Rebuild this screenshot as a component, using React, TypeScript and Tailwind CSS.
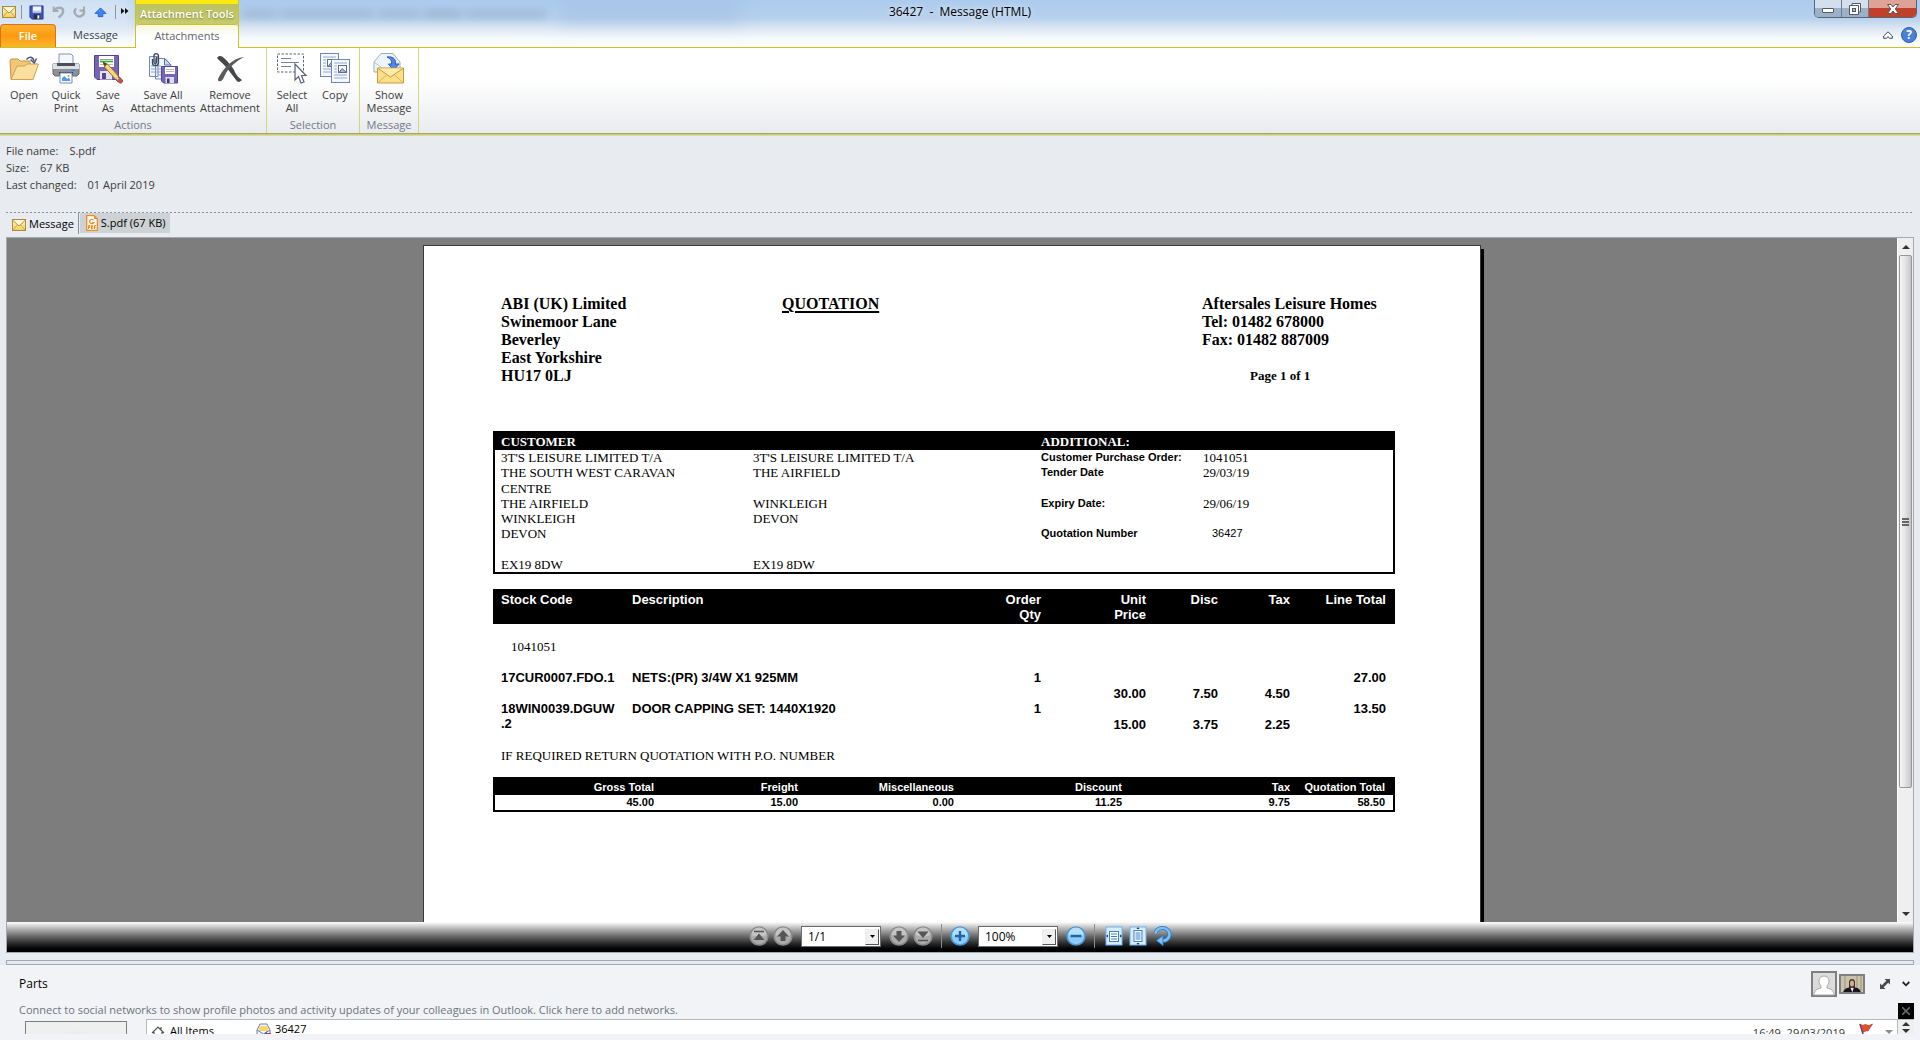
import React from "react";

const UI_FONT = "font-['Open_Sans','Noto_Sans',sans-serif]";
const SERIF = "font-['Liberation_Serif',serif]";
const SANS = "font-['Liberation_Sans',sans-serif]";

/* ---------- Icons ---------- */

const Envelope = ({ className = "" }: { className?: string }) => (
  <svg viewBox="0 0 14 12" className={`w-[14px] h-[12px] ${className}`}>
    <defs>
      <linearGradient id="env" x1="0" y1="0" x2="0" y2="1">
        <stop offset="0" stopColor="#fff7c8" />
        <stop offset="1" stopColor="#f3cf5e" />
      </linearGradient>
    </defs>
    <rect x="0.5" y="0.5" width="13" height="11" fill="url(#env)" stroke="#b08a3c" />
    <path d="M1 1.5 L7 7 L13 1.5" fill="#fff9dc" stroke="#b58f40" />
    <path d="M1 11 L5.2 6 M13 11 L8.8 6" stroke="#cfa650" fill="none" />
  </svg>
);

const Floppy = () => (
  <svg viewBox="0 0 16 16" className="w-[15px] h-[15px]">
    <path d="M1 1 H15 V15 H3 L1 13 Z" fill="#3f52c4" stroke="#2a3a8c" />
    <rect x="4" y="1.5" width="9" height="6.5" fill="#f4f7ff" />
    <path d="M4 6 H13 V8 H4Z" fill="#b8c6f0" />
    <rect x="5" y="10" width="7" height="5" fill="#2b2f3c" />
    <rect x="9" y="11" width="2" height="3.5" fill="#fff" />
  </svg>
);

const Undo = () => (
  <svg viewBox="0 0 14 14" className="w-[13px] h-[14px]">
    <path d="M1.800 1 V6 H7" fill="none" stroke="#a6abb2" strokeWidth="2.200" />
    <path d="M2.500 5.500 C5 1.500 12 1 12 6 C12 9 10 11 7 12.800" fill="none" stroke="#a6abb2" strokeWidth="2.600" />
  </svg>
);

const Redo = () => (
  <svg viewBox="0 0 14 14" className="w-[13px] h-[14px]">
    <path d="M3.500 3 A5 5 0 1 0 11.500 5" fill="none" stroke="#a6abb2" strokeWidth="2.600" />
    <path d="M7 5.500 H11.800 V1" fill="none" stroke="#a6abb2" strokeWidth="2.200" />
  </svg>
);

const ArrowUpBlue = () => (
  <svg viewBox="0 0 14 12" className="w-[13px] h-[11px]">
    <path d="M7 1 L13 7 H9.5 V10.5 H4.5 V7 H1 Z" fill="#3f86ee" stroke="#1f5fd0" />
  </svg>
);

const OpenIcon = () => (
  <svg viewBox="0 0 32 32" className="size-8">
    <path d="M2 9 L3 7 H10 L12 9 H22 V27 H3 Z" fill="#f0c878" stroke="#c79447" />
    <path d="M3 27.5 L9 14 H17 L19 12 H30.5 L25 27.5 Z" fill="#fbdf9d" stroke="#d3a050" />
    <path d="M18.500 7.500 C21 4 25 4.500 26 9" fill="none" stroke="#47597a" strokeWidth="1.500" />
    <path d="M22.500 7.500 L26.200 11 L28.500 6.500" fill="none" stroke="#47597a" strokeWidth="1.500" />
  </svg>
);

const PrintIcon = () => (
  <svg viewBox="0 0 32 32" className="size-8">
    <path d="M9 2 H21 L23 4 V13 H9 Z" fill="#f3f8fe" stroke="#7e93b8" />
    <path d="M3 12 H29 V22 L27 24 H5 L3 22 Z" fill="#8d9197" stroke="#65686e" />
    <path d="M3 12 H29 V17 H3 Z" fill="#dcdfe3" />
    <rect x="7" y="11" width="18" height="3" fill="#4c4f56" />
    <rect x="21" y="17.500" width="4" height="1.500" fill="#2a8ce8" />
    <rect x="9" y="20" width="14" height="3" fill="#3e4149" />
    <path d="M10 21 H22 V31 H10 Z" fill="#fff" stroke="#6d8dc4" />
    <path d="M12 29 V26 L14.500 24 L17 27 L19 25.500 L20.500 29 Z" fill="#4d9ce4" />
    <circle cx="18.500" cy="24" r="1" fill="#e48b3c" />
  </svg>
);

const SaveAsIcon = () => (
  <svg viewBox="0 0 32 32" className="size-8">
    <path d="M2.500 3.500 H26.500 V27.500 H5 L2.500 25 Z" fill="#7764b4" stroke="#55448f" />
    <rect x="7" y="4" width="15" height="11" fill="#fff" />
    <path d="M8 7.500 H21" stroke="#9b9fa8" />
    <path d="M8 9.500 H21" stroke="#29b129" strokeWidth="1.600" />
    <path d="M8 12.500 H21" stroke="#b7bac2" />
    <rect x="8" y="19" width="12" height="8.500" fill="#e3e2ee" />
    <rect x="10" y="21" width="4" height="6" fill="#55448f" />
    <path d="M11 10 L16 12.500 L28.500 26.500 L25.500 29.500 L13 15.500 Z" fill="#f8d873" stroke="#9b7225" />
    <path d="M11 10 L15 12 L13 14.500 Z" fill="#3b3b3b" />
    <path d="M26.500 24.500 L30.500 28 C31 30.500 29 31.500 27.500 31 L24 27.500 Z" fill="#c9564d" stroke="#8c4640" />
    <path d="M25.500 25 L27 26.500 L25.500 28 L24 26.500 Z" fill="#ddd" />
  </svg>
);

const SaveAllIcon = () => (
  <svg viewBox="0 0 32 32" className="size-8">
    <path d="M2.500 4.500 H11 V24.500 H2.500 Z M8.500 6.500 H18 L24 13 V27 H8.500 Z" fill="#eef5fd" stroke="#7489b0" />
    <path d="M17.500 6.500 V13 H24 Z" fill="#c7daf3" stroke="#5874a8" />
    <path d="M4 14 H14 M4 17 H14 M4 20 H14 M11 23 H14" stroke="#90a6cc" />
    <path d="M5.500 7 V11 C5.500 14.500 11.500 14.500 11.500 11 V4 C11.500 .8 7 .8 7 4 V10 C7 12 9.500 12 9.500 10 V5" fill="none" stroke="#3e485c" strokeWidth="1.300" />
    <path d="M14.500 14.500 H30.500 V31 H16.500 L14.500 29 Z" fill="#7764b4" stroke="#55448f" />
    <rect x="18" y="15" width="10" height="7" fill="#fff" />
    <path d="M19 17.500 H27 M19 19.500 H27" stroke="#b6b9c4" />
    <rect x="18.500" y="25" width="8.500" height="6" fill="#dddcea" />
    <rect x="20" y="26.500" width="2.500" height="4.500" fill="#44357c" />
  </svg>
);

const RemoveIcon = () => (
  <svg viewBox="0 0 32 32" className="size-8">
    <path d="M3 6 C5 3 8 4 10 6 C14 10 17 13 20 18 C22 23 25 26 28 28 C26 30 24 31 22 28 C18 23 15 18 11 14 C9 11 5 9 3 6 Z" fill="#46474a" />
    <path d="M30.500 5 C22 9 16 15 12 21 C10 25 9 28 7 29 C4 30 3 28 5 25 C10 16 18 6 30.500 5 Z" fill="#5a5b5e" />
  </svg>
);

const SelectIcon = () => (
  <svg viewBox="0 0 32 32" className="size-8">
    <rect x="1.500" y="2" width="26" height="18" fill="none" stroke="#5b6478" strokeDasharray="2.500 1.500" />
    <path d="M5 6.500 H15 M5 10.500 H23 M5 14.500 H15" stroke="#7483a0" />
    <path d="M19 12 V28 L22.500 24.500 L25 31 L28 30 L25.500 23.500 H30 Z" fill="#fff" stroke="#56637d" strokeWidth="1.200" />
  </svg>
);

const CopySheet = ({ x, y }: { x: number; y: number }) => (
  <g transform={`translate(${x} ${y})`}>
    <rect x="0.500" y="0.500" width="18" height="23" fill="#f5f9fe" stroke="#6f86b2" />
    <path d="M3 4 H16 M3 7 H6 M3 10 H6 M3 13 H6 M3 16 H16 M3 19 H16" stroke="#92a7cd" />
    <rect x="7.500" y="6.500" width="8" height="7" fill="#fff" stroke="#5c6d8f" />
    <path d="M8.500 13 L11 9.500 L15 13" fill="#9fb6d8" stroke="#5c6d8f" />
  </g>
);

const CopyIcon = () => (
  <svg viewBox="0 0 32 32" className="size-8">
    <CopySheet x={1} y={1} />
    <CopySheet x={12} y={7} />
  </svg>
);

const ShowIcon = () => (
  <svg viewBox="0 0 32 32" className="size-8">
    <path d="M1 10 L8 1.500 H20 L27 10 V20 H1 Z" fill="#eef4fb" stroke="#a1abb9" />
    <path d="M1 10 L9 16 M27 10 L20 16" stroke="#b9c2ce" />
    <path d="M14 5 C21 4 23 8 22.500 12 H26 L20.500 18.500 L15.500 12 H18.500 C19 9 18 7 14 5 Z" fill="#4b87ea" stroke="#2a5dbf" />
    <path d="M4.500 16 H30.500 V31 H4.500 Z" fill="#fbe08a" stroke="#c99a3a" />
    <path d="M5 16.500 L17.500 25 L30 16.500" fill="#fdebaa" stroke="#c99a3a" />
    <path d="M5 30.500 L14 22.500 M30 30.500 L21 22.500" stroke="#ddb250" />
  </svg>
);

const PdfIcon = () => (
  <svg viewBox="0 0 12 16" className="w-[12px] h-[16px]">
    <path d="M.7 .7 H8 L11.300 4 V15.300 H.7 Z" fill="#fff" stroke="#f28a1e" strokeWidth="1.300" />
    <path d="M8 .7 V4 H11.300 Z" fill="#f28a1e" />
    <path d="M7.500 5 A2.200 2.200 0 1 0 7.800 7.500 H6" fill="none" stroke="#f28a1e" strokeWidth="1.200" />
    <path d="M2.500 14 V10.500 H4 V12.300 H2.500 M5.500 10.500 V13.700 H6.800 V10.500 Z M8.500 14 V10.500 H10 M8.500 12.200 H9.700" fill="none" stroke="#f28a1e" />
  </svg>
);

/* ---------- Ribbon ---------- */

interface RibbonItem {
  lines: string[];
  icon: React.ReactNode;
  width: string;
}

const RIBBON_GROUPS: { title: string; items: RibbonItem[] }[] = [
  {
    title: "Actions",
    items: [
      { lines: ["Open"], icon: <OpenIcon />, width: "w-[42px]" },
      { lines: ["Quick", "Print"], icon: <PrintIcon />, width: "w-[42px]" },
      { lines: ["Save", "As"], icon: <SaveAsIcon />, width: "w-[42px]" },
      { lines: ["Save All", "Attachments"], icon: <SaveAllIcon />, width: "w-[68px]" },
      { lines: ["Remove", "Attachment"], icon: <RemoveIcon />, width: "w-[66px]" },
    ],
  },
  {
    title: "Selection",
    items: [
      { lines: ["Select", "All"], icon: <SelectIcon />, width: "w-[44px]" },
      { lines: ["Copy"], icon: <CopyIcon />, width: "w-[42px]" },
    ],
  },
  {
    title: "Message",
    items: [{ lines: ["Show", "Message"], icon: <ShowIcon />, width: "w-[52px]" }],
  },
];

const Ribbon = () => (
  <div className="flex h-[85px] bg-linear-to-b from-white from-35% to-[#e9ebee]">
    {RIBBON_GROUPS.map((group) => (
      <section
        key={group.title}
        className="flex flex-col border-r border-[#d3d57f] px-[3px] pt-1"
      >
        <div className="flex flex-1 items-start">
          {group.items.map((item) => (
            <button
              key={item.lines.join(" ")}
              className={`flex flex-col items-center text-[11px] leading-[13px] text-[#3b3b3b] ${item.width}`}
            >
              {item.icon}
              <span className="mt-1 text-center">
                {item.lines.map((line) => (
                  <span key={line} className="block whitespace-nowrap">
                    {line}
                  </span>
                ))}
              </span>
            </button>
          ))}
        </div>
        <h2 className="text-center text-[11px] leading-4 text-[#737b87]">{group.title}</h2>
      </section>
    ))}
  </div>
);

const Divider = () => <span className="h-[14px] w-px bg-[#8b95a3]" />;

const TitleBar = () => (
  <header className="relative flex h-12 border-b border-[#cbc31f] bg-[linear-gradient(to_bottom,#abcbee_0,#b7d0ec_18px,#dde8f4_29px,#f6f9fd_38px,#fcfdff_47px)]">
    {/* Glass reflections of the window behind */}
    <div aria-hidden="true" className="absolute inset-0 overflow-hidden">
      <div className="absolute left-[242px] top-[10px] flex gap-1 opacity-25 blur-[4px]">
        <span className="h-[8px] w-[34px] bg-[#5f7894]" />
        <span className="h-[8px] w-[94px] bg-[#5f7894]" />
        <span className="h-[8px] w-[42px] bg-[#5f7894]" />
        <span className="h-[8px] w-[38px] bg-[#4f6884]" />
        <span className="h-[8px] w-[80px] bg-[#5f7894]" />
      </div>
      <div className="absolute -left-5 -top-2 h-10 w-[155px] bg-[#e4edf7] opacity-70 blur-[8px]" />
      <div className="absolute left-[560px] top-0 h-6 w-[180px] bg-[#8fb2d8] opacity-30 blur-[10px]" />
    </div>

    <div className="relative flex w-[135px] flex-col">
      <div className="flex h-6 items-center gap-[7px] pl-[2px]">
        <div className="flex items-center gap-[5px]">
          <Envelope />
          <Divider />
        </div>
        <div className="flex items-center gap-2">
          <button aria-label="Save"><Floppy /></button>
          <button aria-label="Undo"><Undo /></button>
          <button aria-label="Redo"><Redo /></button>
          <button aria-label="Previous item"><ArrowUpBlue /></button>
          <Divider />
        </div>
      </div>
      <nav className="flex flex-1">
        <a
          href="#file"
          className="flex w-14 items-center justify-center rounded-t-[4px] border border-b-0 border-[#d8731c] bg-linear-to-b from-[#fdb02c] via-[#fb9a0c] to-[#fdb62c] text-[11px] font-semibold text-white"
        >
          File
        </a>
        <a href="#message" className="flex flex-1 items-center justify-center text-[11px] text-[#3c434d]">
          Message
        </a>
      </nav>
      <button aria-label="More commands" className="absolute right-[6px] top-[7px]">
        <svg viewBox="0 0 8 8" className="size-2">
          <path d="M0 1 L3.500 4 L0 7 Z M4 1 L7.500 4 L4 7 Z" fill="#111" />
        </svg>
      </button>
    </div>

    <div className="relative -mb-px flex w-[104px] flex-col border-x border-[#cbc31f]">
      <div className="flex h-6 items-center justify-center border-t-4 border-[#fde910] bg-linear-to-b from-[#bcc160] to-[#c7cb6e] text-[11px] font-semibold whitespace-nowrap text-white [text-shadow:0_1px_2px_#7d8235]">
        Attachment Tools
      </div>
      <a
        href="#attachments"
        className="flex flex-1 items-center justify-center rounded-t-[3px] border-t border-[#cbc31f] bg-linear-to-b from-[#f7f7df] to-white to-50% text-[11px] text-[#5b6470]"
      >
        Attachments
      </a>
    </div>

    <h1 className="pointer-events-none absolute inset-x-0 top-[3px] text-center text-[12px] leading-[18px] whitespace-pre text-black [text-shadow:0_0_6px_#fff]">
      {"36427  -  Message (HTML)"}
    </h1>

    <div className="relative ml-auto flex flex-col items-end pr-[3px]">
      <div className="flex h-[18px] overflow-hidden rounded-b-[5px] border border-t-0 border-[#56657a]">
        <button aria-label="Minimize" className="flex w-[27px] items-center justify-center border-r border-[#6c7b90] bg-linear-to-b from-[#d3dfec] from-45% to-[#9cb0c6] to-50%">
          <svg viewBox="0 0 12 5" className="mt-[3px] h-[5px] w-3">
            <rect x="0.500" y="0.500" width="11" height="4" rx="0.500" fill="#fff" stroke="#505a68" />
          </svg>
        </button>
        <button aria-label="Restore" className="flex w-[27px] items-center justify-center border-r border-[#6c7b90] bg-linear-to-b from-[#d3dfec] from-45% to-[#9cb0c6] to-50%">
          <svg viewBox="0 0 12 12" className="size-3">
            <path d="M3 .5 H11.500 V9 H3 Z" fill="#fff" stroke="#505a68" />
            <path d="M.5 2.500 H9.500 V11.500 H.5 Z" fill="#fff" stroke="#505a68" />
            <rect x="3.500" y="5.500" width="3" height="3" fill="#a9bbcf" stroke="#505a68" />
          </svg>
        </button>
        <button aria-label="Close" className="flex w-[47px] items-center justify-center bg-linear-to-b from-[#dfa297] from-45% to-[#c1402a] to-50%">
          <svg viewBox="0 0 12 10" className="h-[10px] w-3">
            <path d="M.5 .5 H4 L6 3 L8 .5 H11.500 L8.300 5 L11.500 9.500 H8 L6 7 L4 9.500 H.5 L3.700 5 Z" fill="#fff" stroke="#555" />
          </svg>
        </button>
      </div>
      <div className="mt-[9px] flex items-center gap-2">
        <button aria-label="Minimize the ribbon">
          <svg viewBox="0 0 10 8" className="h-2 w-[10px]">
            <path d="M.7 5 L5 .8 L9.300 5 V7.300 H6.500 L5 5.500 L3.500 7.300 H.7 Z" fill="#fff" stroke="#3d4654" />
          </svg>
        </button>
        <button
          aria-label="Help"
          className="flex size-4 items-center justify-center rounded-full border border-[#2c5cb0] bg-[#4a80d8] text-[12px] leading-none font-bold text-white"
        >
          ?
        </button>
      </div>
    </div>
  </header>
);

/* ---------- Attachment details ---------- */

const DETAILS = [
  ["File name:", "S.pdf"],
  ["Size:", "67 KB"],
  ["Last changed:", "01 April 2019"],
];

const AttachmentInfo = () => (
  <div>
    <dl className="px-[6px] pt-[6px] pb-[19px] text-[11px] leading-[17px] text-[#3b3b3b]">
      {DETAILS.map(([label, value]) => (
        <div key={label} className="flex gap-[11px]">
          <dt>{label}</dt>
          <dd>{value}</dd>
        </div>
      ))}
    </dl>
    <div className="mx-[6px] h-px bg-[repeating-linear-gradient(to_right,#8c9095_0_2px,transparent_2px_4px)]" />
    <div className="flex h-6 items-start pl-[6px] text-[11px] text-black">
      <button className="flex h-[21px] items-center gap-[3px] border-r border-[#8c9095] pt-[2px] pl-[6px] pr-1">
        <Envelope />
        Message
      </button>
      <button className="ml-px flex h-5 items-center gap-[3px] bg-[#cdd2d4] pl-[6px] pr-1">
        <PdfIcon />
        S.pdf (67 KB)
      </button>
    </div>
  </div>
);

/* ---------- Document ---------- */

const ADDRESS = ["ABI (UK) Limited", "Swinemoor Lane", "Beverley", "East Yorkshire", "HU17 0LJ"];

const CUSTOMER = [
  "3T'S LEISURE LIMITED T/A",
  "THE SOUTH WEST CARAVAN",
  "CENTRE",
  "THE AIRFIELD",
  "WINKLEIGH",
  "DEVON",
  "",
  "EX19 8DW",
];

const DELIVERY = ["3T'S LEISURE LIMITED T/A", "THE AIRFIELD", "", "WINKLEIGH", "DEVON", "", "", "EX19 8DW"];

const ADDITIONAL = [
  ["Customer Purchase Order:", "1041051"],
  ["Tender Date", "29/03/19"],
  ["", ""],
  ["Expiry Date:", "29/06/19"],
  ["", ""],
  ["Quotation Number", "36427"],
  ["", ""],
  ["", ""],
];

const LINES = [
  { code: ["17CUR0007.FDO.1"], text: "NETS:(PR) 3/4W X1 925MM", qty: "1", price: "30.00", disc: "7.50", tax: "4.50", total: "27.00" },
  { code: ["18WIN0039.DGUW", ".2"], text: "DOOR CAPPING SET: 1440X1920", qty: "1", price: "15.00", disc: "3.75", tax: "2.25", total: "13.50" },
];

const TOTALS = [
  ["Gross Total", "45.00"],
  ["Freight", "15.00"],
  ["Miscellaneous", "0.00"],
  ["Discount", "11.25"],
  ["Tax", "9.75"],
  ["Quotation Total", "58.50"],
];

const CustomerBox = () => (
  <section className={`mt-[46px] border-2 border-black text-[13px] ${SERIF}`}>
    <div className="grid grid-cols-[252px_288px_162px_1fr] bg-black pl-[6px] leading-[17px] font-bold text-white">
      <h3>CUSTOMER</h3>
      <h3 className="col-start-3">ADDITIONAL:</h3>
    </div>
    <div className="grid h-[122px] grid-flow-col grid-cols-[252px_288px_162px_1fr] grid-rows-8 pl-[6px] leading-[15px]">
      {CUSTOMER.map((line, i) => (
        <p key={`c-${i}`}>{line}</p>
      ))}
      {DELIVERY.map((line, i) => (
        <p key={`d-${i}`}>{line}</p>
      ))}
      {ADDITIONAL.map(([label], i) => (
        <p key={`l-${i}`} className={`text-[11px] font-bold whitespace-nowrap ${SANS}`}>
          {label}
        </p>
      ))}
      {ADDITIONAL.map(([label, value], i) => (
        <p key={`v-${i}`} className={label === "Quotation Number" ? `pl-[9px] text-[11px] ${SANS}` : ""}>
          {value}
        </p>
      ))}
    </div>
  </section>
);

const ItemTable = () => (
  <table className={`mt-[15px] w-full table-fixed text-right text-[13px] leading-[15px] font-bold ${SANS}`}>
    <colgroup>
      <col className="w-[139px]" />
      <col />
      <col className="w-[76px]" />
      <col className="w-[105px]" />
      <col className="w-[72px]" />
      <col className="w-[72px]" />
      <col className="w-[105px]" />
    </colgroup>
    <thead className="bg-black align-top text-white">
      <tr>
        <th className="pt-[3px] pb-[2px] pl-2 text-left">Stock Code</th>
        <th className="pt-[3px] text-left">Description</th>
        <th className="pt-[3px]">Order<br />Qty</th>
        <th className="pt-[3px] pl-12">Unit Price</th>
        <th className="pt-[3px]">Disc</th>
        <th className="pt-[3px]">Tax</th>
        <th className="pt-[3px] pb-[2px] pr-[9px]">Line Total</th>
      </tr>
    </thead>
    <tbody>
      <tr className="border-t-2 border-black">
        <td colSpan={7} className={`pt-[15px] pb-4 pl-[18px] text-left font-normal ${SERIF}`}>
          1041051
        </td>
      </tr>
      {LINES.map((line) => (
        <tr key={line.text} className="h-[31px] align-top">
          <td className="pl-2 text-left">
            {line.code.map((part) => (
              <span key={part} className="block">{part}</span>
            ))}
          </td>
          <td className="text-left">{line.text}</td>
          <td>{line.qty}</td>
          <td className="pt-4">{line.price}</td>
          <td className="pt-4">{line.disc}</td>
          <td className="pt-4">{line.tax}</td>
          <td className="pr-[9px]">{line.total}</td>
        </tr>
      ))}
    </tbody>
  </table>
);

const TotalsTable = () => (
  <table className={`mt-[14px] w-full table-fixed border-2 border-black text-right text-[11px] leading-[15px] font-bold ${SANS}`}>
    <colgroup>
      <col className="w-[160px]" />
      <col className="w-[144px]" />
      <col className="w-[156px]" />
      <col className="w-[168px]" />
      <col className="w-[168px]" />
      <col />
    </colgroup>
    <thead className="bg-black text-white">
      <tr>
        {TOTALS.map(([label]) => (
          <th key={label} className="pt-px whitespace-nowrap last:pr-2">{label}</th>
        ))}
      </tr>
    </thead>
    <tbody>
      <tr>
        {TOTALS.map(([label, value]) => (
          <td key={label} className="last:pr-2">{value}</td>
        ))}
      </tr>
    </tbody>
  </table>
);

const QuotationPage = () => (
  <article className="mt-[7px] h-[1200px] w-[1058px] shrink-0 border border-[#3a3a3a] bg-white pt-[49px] pr-[85px] pl-[69px] text-black shadow-[3px_4px_0_#000]">
    <div className={`grid grid-cols-[281px_420px_1fr] pl-2 text-[16px] leading-[18px] font-bold ${SERIF}`}>
      <address className="not-italic">
        {ADDRESS.map((line) => (
          <p key={line}>{line}</p>
        ))}
      </address>
      <h2 className="underline decoration-2 underline-offset-2">QUOTATION</h2>
      <div>
        <p>Aftersales Leisure Homes</p>
        <p>Tel: 01482 678000</p>
        <p>Fax: 01482 887009</p>
        <p className="mt-[18px] pl-12 text-[13px]">Page 1 of 1</p>
      </div>
    </div>
    <CustomerBox />
    <ItemTable />
    <p className={`mt-4 pl-2 text-[13px] leading-[15px] ${SERIF}`}>
      IF REQUIRED RETURN QUOTATION WITH P.O. NUMBER
    </p>
    <TotalsTable />
  </article>
);

/* ---------- Viewer ---------- */

const ScrollBar = () => (
  <div className="flex w-4 shrink-0 flex-col border-l border-white bg-[#efefef]">
    <button aria-label="Scroll up" className="flex h-[17px] items-center justify-center">
      <svg viewBox="0 0 8 4" className="h-1 w-2"><path d="M4 0 L8 4 H0 Z" fill="#333" /></svg>
    </button>
    <div className="flex-1 px-px">
      <div className="flex h-[82%] flex-col items-center justify-center gap-px rounded-[2px] border border-[#979797] bg-linear-to-r from-[#f6f6f6] via-[#e2e2e4] to-[#c6c4ca]">
        <span className="h-[2px] w-[7px] bg-[#666]" />
        <span className="h-[2px] w-[7px] bg-[#666]" />
        <span className="h-[2px] w-[7px] bg-[#666]" />
      </div>
    </div>
    <button aria-label="Scroll down" className="flex h-[17px] items-center justify-center">
      <svg viewBox="0 0 8 4" className="h-1 w-2"><path d="M4 4 L8 0 H0 Z" fill="#333" /></svg>
    </button>
  </div>
);

const RoundButton = ({ label, blue, children }: { label: string; blue?: boolean; children: React.ReactNode }) => (
  <button aria-label={label}>
    <svg viewBox="0 0 20 20" className="size-5">
      <circle cx="10" cy="10" r="9" fill={blue ? "#8ccbfa" : "#ababab"} stroke={blue ? "#4b97d8" : "#8a8a8a"} strokeWidth="1.500" />
      <path d="M2.500 9 A7.500 7.500 0 0 1 17.500 9 C13 11 7 11 2.500 9 Z" fill={blue ? "#b4dffd" : "#c4c4c4"} />
      {children}
    </svg>
  </button>
);

const ToolSelect = ({ label, value }: { label: string; value: string }) => (
  <div className="relative flex h-[21px] w-20 border border-[#6b6b6b] bg-white">
    <select aria-label={label} className="block flex-1 appearance-none bg-transparent pl-[6px] text-[12px] leading-[19px] text-black">
      <option>{value}</option>
    </select>
    <span className="pointer-events-none absolute top-[2px] right-px flex h-4 w-[14px] items-center justify-center border border-t-[#eee] border-r-[#555] border-b-[#555] border-l-[#eee] bg-[#f0f0f0]">
      <svg viewBox="0 0 5 3" className="h-[3px] w-[5px]"><path d="M0 0 H5 L2.500 3 Z" fill="#000" /></svg>
    </span>
  </div>
);

const ViewerToolbar = () => (
  <div className="flex h-[30px] items-center justify-center gap-2 bg-linear-to-b from-white to-black pb-[2px] pl-[2px]">
    <div className="flex gap-1">
      <RoundButton label="First page">
        <path d="M5 5.500 H15" stroke="#555" strokeWidth="1.500" />
        <path d="M10 7.500 L15.500 14 H4.500 Z" fill="#555" />
      </RoundButton>
      <RoundButton label="Previous page">
        <path d="M10 4 L16 10.500 H12.500 V15 H7.500 V10.500 H4 Z" fill="#555" />
      </RoundButton>
    </div>
    <ToolSelect label="Page" value="1/1" />
    <div className="flex gap-1">
      <RoundButton label="Next page">
        <path d="M10 16 L16 9.500 H12.500 V5 H7.500 V9.500 H4 Z" fill="#555" />
      </RoundButton>
      <RoundButton label="Last page">
        <path d="M4.500 5.500 H15.500 L10 12 Z" fill="#555" />
        <path d="M5 14.500 H15" stroke="#555" strokeWidth="1.500" />
      </RoundButton>
    </div>
    <span className="h-6 w-px bg-[#8a8a8a]" />
    <RoundButton label="Zoom in" blue>
      <path d="M10 5 V15 M5 10 H15" stroke="#1f66a8" strokeWidth="2.500" />
    </RoundButton>
    <ToolSelect label="Zoom" value="100%" />
    <RoundButton label="Zoom out" blue>
      <path d="M4.500 10 H15.500" stroke="#1f66a8" strokeWidth="2.500" />
    </RoundButton>
    <span className="h-6 w-px bg-[#8a8a8a]" />
    <div className="ml-[2px] flex gap-[6px]">
      <button aria-label="Fit width">
        <svg viewBox="0 0 18 20" className="h-5 w-[18px]">
          <rect x="1" y="1" width="16" height="18" fill="#d9ecfd" stroke="#6db4f2" />
          <rect x="4.500" y="5.500" width="9" height="10" fill="#fff" stroke="#3a7fc4" />
          <path d="M6 8 H12 M6 10.500 H12 M6 13 H12" stroke="#3a7fc4" />
          <path d="M1 10 L3 8.500 V11.500 Z M17 10 L15 8.500 V11.500 Z" fill="#123f6e" />
        </svg>
      </button>
      <button aria-label="Fit page">
        <svg viewBox="0 0 18 20" className="h-5 w-[18px]">
          <rect x="1" y="1" width="16" height="18" fill="#d9ecfd" stroke="#6db4f2" />
          <rect x="5" y="4.500" width="8" height="11" fill="#fff" stroke="#3a7fc4" />
          <path d="M6.500 7 H11.500 M6.500 9 H11.500 M6.500 11 H11.500 M6.500 13 H11.500" stroke="#3a7fc4" />
          <path d="M9 1 L7.500 3 H10.500 Z M9 19 L7.500 17 H10.500 Z" fill="#123f6e" />
        </svg>
      </button>
      <button aria-label="Rotate">
        <svg viewBox="0 0 20 20" className="size-5">
          <path d="M2.500 7.500 A7 6.500 0 1 1 12 14.500 H9" fill="none" stroke="#2f7fc8" strokeWidth="4" />
          <path d="M2.500 7.500 A7 6.500 0 1 1 12 14.500 H9" fill="none" stroke="#7cc0f7" strokeWidth="2.400" />
          <path d="M10 9.500 V19.500 L3.500 14.500 Z" fill="#7cc0f7" stroke="#2f7fc8" />
        </svg>
      </button>
    </div>
  </div>
);

/* ---------- People pane ---------- */

const PeoplePane = () => (
  <footer className="bg-[#f1f3f6] pb-[6px] text-[12px]">
    <div className="flex h-[37px] items-center justify-between pr-[6px] pl-[19px] text-black">
      <h2 className="text-[12px]">Parts</h2>
      <div className="flex items-center">
        <svg viewBox="0 0 26 26" className="size-[26px]">
          <rect x="1" y="1" width="24" height="24" fill="#dcdcdc" stroke="#7f7f7f" strokeWidth="2" />
          <path d="M3 24 C3 19 6 18 10 17 V15 C7 12 7 5 13 5 C19 5 19 12 16 15 V17 C20 18 23 19 23 24 Z" fill="#fff" stroke="#a8a8a8" />
        </svg>
        <svg viewBox="0 0 26 20" className="ml-[2px] h-5 w-[26px]">
          <rect width="26" height="20" fill="#c9c3ab" />
          <path d="M6 2 V17 M18 2 V17 M22 2 V17" stroke="#b3ac92" strokeWidth="2" />
          <path d="M10 14 V8 C10 4 16 4 16 8 V14 Z" fill="#4a332b" />
          <ellipse cx="13" cy="9.500" rx="2" ry="3" fill="#d9ab9b" />
          <path d="M4 19 C5 14 9 13.500 11 13.500 L13 17 L15 13.500 C18 13.500 21 14 22 19 Z" fill="#16161c" />
          <path d="M12 14 H14.500 L13.500 18.500 Z" fill="#f3eef0" />
          <rect x="1" y="1" width="24" height="18" fill="none" stroke="#7f7f7f" strokeWidth="2" />
        </svg>
        <button aria-label="Expand" className="ml-[15px]">
          <svg viewBox="0 0 10 10" className="size-[10px]">
            <path d="M4.500 0 H10 V5.500 L8.200 3.700 L3.700 8.200 L5.500 10 H0 V4.500 L1.800 6.300 L6.300 1.800 Z" fill="#4a4a4a" />
          </svg>
        </button>
        <button aria-label="Collapse" className="mr-1 ml-3">
          <svg viewBox="0 0 8 6" className="h-[6px] w-2">
            <path d="M.7 1 L4 4.300 L7.300 1" fill="none" stroke="#222" strokeWidth="1.800" />
          </svg>
        </button>
      </div>
    </div>
    <div className="flex h-[17px] items-center justify-between pr-[6px] pl-[19px] text-[11px] text-[#6f747b]">
      <a href="#networks">
        Connect to social networks to show profile photos and activity updates of your colleagues in Outlook. Click here to add networks.
      </a>
      <button aria-label="Close" className="flex size-4 items-center justify-center bg-black">
        <svg viewBox="0 0 8 8" className="size-2"><path d="M0 0 L8 8 M8 0 L0 8" stroke="#666" strokeWidth="1.600" /></svg>
      </button>
    </div>
    <div className="flex h-[15px] overflow-hidden pr-[6px] pl-[25px]">
      <div className="mt-[2px] h-10 w-[102px] border border-[#7d7d7d] bg-[radial-gradient(circle_at_50%_100%,#cfcfcf,#efefef_30px)]" />
      <div className="ml-[19px] flex h-10 flex-1 items-start border border-b-0 border-[#b5babf] bg-white pl-1 text-[11px] text-black">
        <svg viewBox="0 0 14 14" className="mt-[5px] size-[14px]">
          <path d="M1 8 L7 2 L13 8 M3 7 V13 H11 V7 M10 2 V5" fill="none" stroke="#555" strokeWidth="1.200" />
          <rect x="6" y="9" width="2" height="4" fill="#444" />
        </svg>
        <span className="mt-[2px] ml-[5px] w-[86px] leading-[18px]">All Items</span>
        <svg viewBox="0 0 16 16" className="mt-[3px] size-4">
          <path d="M1 7 L4 1 H11 L14 7 V15 H1 Z" fill="#f3f6fb" stroke="#6f7fb0" />
          <path d="M3 3 H12 V8 H3 Z" fill="#f7d76a" />
          <path d="M1 7 L7.500 11 L14 7" fill="none" stroke="#6f7fb0" />
          <path d="M8 11 L11 8 V10 H15 V13 H11 V14.500 Z" fill="#8e3fa8" />
        </svg>
        <span className="ml-[3px] leading-[18px]">36427</span>
        <span className="mt-[4px] mr-[14px] ml-auto leading-[18px] whitespace-pre text-[#333]">{"16:49  29/03/2019"}</span>
        <svg viewBox="0 0 14 12" className="mt-[3px] mr-3 h-3 w-[14px]">
          <path d="M1 1 L4 11" stroke="#2b4f9a" strokeWidth="1.500" />
          <path d="M1 1 C4 4 6 0 8 2 C10 3 11 2 13.500 1 L9 8 C7 7 6 9 4 9 Z" fill="#e4502e" stroke="#a72b14" strokeWidth="0.600" />
        </svg>
        <svg viewBox="0 0 8 4" className="mt-[10px] mr-1 h-1 w-2"><path d="M0 0 H8 L4 4 Z" fill="#8b8b8b" /></svg>
      </div>
      <div className="flex w-4 flex-col items-center gap-[3px] border-t border-[#b5babf] bg-[#efefef] pt-[2px]">
        <svg viewBox="0 0 8 4" className="h-1 w-2"><path d="M4 0 L8 4 H0 Z" fill="#333" /></svg>
        <svg viewBox="0 0 8 4" className="h-1 w-2"><path d="M4 4 L8 0 H0 Z" fill="#333" /></svg>
      </div>
    </div>
  </footer>
);

export default function App() {
  return (
    <div className={`flex h-screen flex-col overflow-hidden bg-[#e8ebf0] ${UI_FONT}`}>
      <TitleBar />
      <Ribbon />
      <div className="h-[3px] shrink-0 bg-linear-to-b from-[#95964f] via-[#c9cc74] to-[#dcdfc8]" />
      <AttachmentInfo />
      <main className="mx-[6px] flex min-h-0 flex-1 flex-col border border-[#a2a9b3]">
        <div className="flex min-h-0 flex-1">
          <div className="flex min-w-0 flex-1 items-start justify-center overflow-hidden bg-[#7d7d7d]">
            <QuotationPage />
          </div>
          <ScrollBar />
        </div>
        <ViewerToolbar />
      </main>
      <div className="mx-[6px] mt-[7px] h-[5px] shrink-0 border border-[#a2a9b3] bg-[#e6e9ef]" />
      <PeoplePane />
    </div>
  );
}
